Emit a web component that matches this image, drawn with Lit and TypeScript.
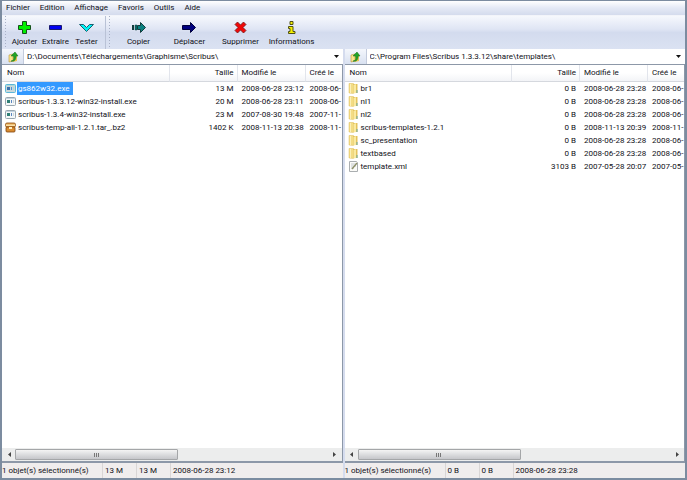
import { LitElement, html, css, svg } from "lit";
import { customElement, property } from "lit/decorators.js";

type Kind = "exe" | "archive" | "folder" | "xml";
interface Entry { name: string; kind: Kind; size: string; modified: string; created: string; selected?: boolean }

const leftEntries: Entry[] = [
  { name: "gs862w32.exe", kind: "exe", size: "13 M", modified: "2008-06-28 23:12", created: "2008-06-", selected: true },
  { name: "scribus-1.3.3.12-win32-install.exe", kind: "exe", size: "20 M", modified: "2008-06-28 23:11", created: "2008-06-" },
  { name: "scribus-1.3.4-win32-install.exe", kind: "exe", size: "23 M", modified: "2007-08-30 19:48", created: "2007-11-" },
  { name: "scribus-temp-all-1.2.1.tar_.bz2", kind: "archive", size: "1402 K", modified: "2008-11-13 20:38", created: "2008-11-" },
];
const folder = (name: string, modified = "2008-06-28 23:28", created = "2008-06-"): Entry =>
  ({ name, kind: "folder", size: "0 B", modified, created });
const rightEntries: Entry[] = [
  folder("br1"), folder("nl1"), folder("nl2"),
  folder("scribus-templates-1.2.1", "2008-11-13 20:39", "2008-11-"),
  folder("sc_presentation"), folder("textbased"),
  { name: "template.xml", kind: "xml", size: "3103 B", modified: "2007-05-28 20:07", created: "2007-05-" },
];

const fileIcons = {
  exe: svg`<rect x="0.5" y="1.5" width="10" height="8" rx="1" fill="#f4f7f8" stroke="#98a6b0"/><path d="M1 2h9v1H1z" fill="#c3d3df"/><path d="M2 4h3v3H2z" fill="#2f7f76"/><path d="M6 4h1v3H6z" fill="#5a86c0"/><path d="M8 4h1v3H8z" fill="#c9d3da"/>`,
  archive: svg`<rect x="0.5" y="1" width="10" height="4" rx="1.5" fill="#e8a850" stroke="#8a4d12" stroke-width=".8"/><rect x="1" y="5" width="9" height="5" rx="1" fill="#d98c30" stroke="#7d430e" stroke-width=".8"/><path d="M1 2.500h9v1.500H1z" fill="#fbe0a6"/><path d="M4 5h3v2H4z" fill="#fff0c4"/>`,
  folder: svg`<path d="M1 .5h4.500v10L1 10z" fill="#f3dc84" stroke="#dcbd5c" stroke-width=".5"/><path d="M5 1h4.500v9H5z" fill="#e3c25c"/><path d="M5.500 2l2.500-1v9l-2.500.5z" fill="#faeaa0"/><path d="M2 1h1v9H2z" fill="#fbf0b8"/><path d="M8.500 7h1v3h-1z" fill="#69aaa6"/>`,
  xml: svg`<path d="M1.500.5h7l1 1v9h-8z" fill="#fbfbf8" stroke="#aaaeb0"/><path d="M3 3h5M3 5h5M3 7h3" stroke="#c4c9cc"/><path d="M4 8l5-6" stroke="#8d9068" stroke-width="1.300"/>`,
};

const toolIcons = {
  add: svg`<path d="M5.500.5h4v4h4v4h-4v4h-4v-4h-4v-4h4z" fill="#00f000" stroke="#16501a"/>`,
  extract: svg`<path d="M1.500 4.500h12v4h-12z" fill="#0000f0" stroke="#1a1a70"/>`,
  test: svg`<path d="M.5 3.500h4l3 3 3-3h4l-7 7z" fill="#00f4f4" stroke="#1c6070"/>`,
  copy: svg`<path d="M1 4h2v5H1z" fill="#123c3c"/><path d="M4 4h2v5H4z" fill="#0a7070" stroke="#123c3c" stroke-width=".5"/><path d="M6.500 4.500h3v-3l5 5-5 5v-3h-3z" fill="#0a8080" stroke="#123c3c"/>`,
  move: svg`<path d="M.5 4.500h8v-3l5 5-5 5v-3h-8z" fill="#000080" stroke="#00003c"/>`,
  remove: svg`<path d="M2 3.500L4.500 1l3 3 3-3L13 3.500l-3 3 3 3-2.500 2.500-3-3-3 3L2 9.500l3-3z" fill="#f00808" stroke="#701818" stroke-width=".8"/>`,
  info: svg`<path d="M6 .5h3v3H6zM4.500 5.500H9v5h2v2H4.500v-2H6v-3H4.500z" fill="#f4f000" stroke="#505018"/>`,
};
const groups = [
  [["add", "Ajouter"], ["extract", "Extraire"], ["test", "Tester"]],
  [["copy", "Copier"], ["move", "Déplacer"], ["remove", "Supprimer"], ["info", "Informations"]],
] as [keyof typeof toolIcons, string][][];

const reset = css`
  * { box-sizing: border-box; }
  button, select { font: inherit; color: inherit; border: 0; margin: 0; padding: 0; background: none; border-radius: 0; }
  svg { display: block; }
`;

@customElement("file-panel")
export class FilePanel extends LitElement {
  @property() path = "";
  @property({ attribute: false }) entries: Entry[] = [];
  @property({ attribute: false }) status: string[] = [];

  static styles = [reset, css`
    :host { display: flex; flex-direction: column; min-width: 0; }
    .address { display: flex; height: 15px; }
    .up { width: 22px; display: grid; place-items: center; background: linear-gradient(#f4f7fc, #d9e1f1); border-right: 1px solid #c3cbdc; }
    .combo { flex: 1; display: grid; align-items: center; background: #fff; min-width: 0; }
    .combo select, .combo svg { grid-area: 1 / 1; }
    .combo select { appearance: none; width: 100%; height: 15px; padding-left: 3px; outline: none; }
    .combo svg { justify-self: end; margin-right: 3px; pointer-events: none; }
    .list { flex: 1; display: flex; flex-direction: column; background: #fff; border: 1px solid #8d98a8; border-width: 1px 1px 2px 0; overflow: hidden; }
    .rows { flex: 1; overflow: hidden; }
    table { table-layout: fixed; width: 100%; border-collapse: separate; border-spacing: 0; }
    .c-col { width: 68px; }
    .c-last { width: 36px; }
    th, td { font-weight: 400; padding: 0 0 0 4px; text-align: left; white-space: nowrap; }
    th { height: 17px; background: linear-gradient(#fff 50%, #f3f4f7); border-right: 1px solid #e2e5ec; border-bottom: 1px solid #d5d8de; }
    th:last-child { border-right: 0; }
    th:first-child { padding-left: 5px; }
    td { height: 13px; }
    td:first-child { padding: 0 0 0 3px; }
    th.num, td.num { text-align: right; padding-right: 4px; }
    th.num { padding-right: 3px; }
    .file { display: flex; align-items: center; height: 13px; }
    .name { padding: 0 3px 0 1px; line-height: 13px; }
    .selected .name { background: #3399ff; color: #fff; }
    .selected svg { filter: sepia(1) hue-rotate(170deg) saturate(3) brightness(.85); }
    .scroll { display: flex; height: 13px; background: #eceded; }
    .scroll button { width: 13px; display: grid; place-items: center; }
    .track { flex: 1; }
    .thumb { width: 52%; height: 11px; margin-top: 1px; display: grid; place-items: center; border: 1px solid #a4a6a8; border-radius: 1px; background: linear-gradient(#f4f4f4, #dcdddf 50%, #c5c6ca); }
    .status { display: flex; height: 15px; background: #f0eded; line-height: 15px; }
    .status span { width: 34px; padding-left: 2px; border-left: 1px solid #d9d6d6; white-space: nowrap; }
    .status span:first-child { width: 100px; padding-left: 0; border: 0; }
    .status span:last-child { flex: 1; }
  `];

  render() {
    return html`
      <div class="address">
        <button class="up" aria-label="Dossier parent"><svg width="12" height="12" viewBox="0 0 12 12"><path d="M2 4l4-1v7l-4 1z" fill="#f9e58c" stroke="#b99634" stroke-width=".6"/><path d="M6 3h4v7l-4 1z" fill="#e9c552"/><path d="M4 10c3 0 3-3 2.500-5H4l4-4 3 4H9c0 3-1 6-5 5z" fill="#22a428" stroke="#12701a" stroke-width=".5"/></svg></button>
        <div class="combo">
          <select aria-label="Chemin"><option>${this.path}</option></select>
          <svg width="7" height="4" viewBox="0 0 7 4"><path d="M1 0h5L3.500 3z" fill="#111"/></svg>
        </div>
      </div>
      <div class="list">
        <div class="rows">
          <table>
            <colgroup><col><col class="c-col"><col class="c-col"><col class="c-last"></colgroup>
            <thead><tr><th>Nom</th><th class="num">Taille</th><th>Modifié le</th><th>Créé le</th></tr></thead>
            <tbody>${this.entries.map((e) => html`
              <tr class=${e.selected ? "selected" : ""}>
                <td><div class="file"><svg width="12" height="11" viewBox="0 0 12 11">${fileIcons[e.kind]}</svg><span class="name">${e.name}</span></div></td>
                <td class="num">${e.size}</td><td>${e.modified}</td><td>${e.created}</td>
              </tr>`)}</tbody>
          </table>
        </div>
        <div class="scroll">
          <button aria-label="Gauche"><svg width="4" height="5" viewBox="0 0 4 5"><path d="M4 0v5L1 2.500z" fill="#444"/></svg></button>
          <div class="track"><div class="thumb"><svg width="6" height="4" viewBox="0 0 6 4"><path d="M.5 0v4M2.500 0v4M4.500 0v4" stroke="#777"/></svg></div></div>
          <button aria-label="Droite"><svg width="4" height="5" viewBox="0 0 4 5"><path d="M0 0v5l3-2.500z" fill="#444"/></svg></button>
        </div>
      </div>
      <div class="status">${this.status.map((s) => html`<span>${s}</span>`)}</div>`;
  }
}

@customElement("app-root")
export class AppRoot extends LitElement {
  static styles = [reset, css`
    :host { display: flex; flex-direction: column; box-sizing: border-box; min-height: 100vh; font: 8px/12px "Roboto", sans-serif; color: #101018;
      background: #d5dcee; border: 1px solid #7c8ca0; border-width: 1px 2px 2px; }
    nav { display: flex; height: 15px; gap: 10px; padding-left: 4px; background: linear-gradient(#fff, #e4e9f5 50%, #d4dbed); border-bottom: 1px solid #f2f4fa; }
    .tools { display: flex; height: 33px; background: linear-gradient(#f6f8fd, #dfe5f4 40%, #d3dbee 50%, #dbe2f2); }
    .group { display: flex; border-right: 1px solid #b9c2d6; padding: 0 3px 0 2px; }
    .group:last-child { border: 0; }
    .grip { width: 4px; margin-right: 1px; background: repeating-linear-gradient(#a7b0c6 0 1px, transparent 1px 3px) no-repeat 1px 0 / 1px 100%; }
    .tool { width: 31px; display: flex; flex-direction: column; align-items: center; padding-top: 5px; gap: 2px; white-space: nowrap; }
    .group:last-child .tool { width: 51px; }
    main { flex: 1; display: grid; grid-template-columns: 1fr 1fr; gap: 2px; }
  `];

  render() {
    return html`
      <nav>${["Fichier", "Edition", "Affichage", "Favoris", "Outils", "Aide"].map((m) => html`<button>${m}</button>`)}</nav>
      <div class="tools">${groups.map((g) => html`<div class="group"><span class="grip"></span>${g.map(([icon, label]) => html`
        <button class="tool"><svg width="15" height="13" viewBox="0 0 15 13">${toolIcons[icon]}</svg><span>${label}</span></button>`)}</div>`)}</div>
      <main>
        <file-panel .path=${"D:\\Documents\\Téléchargements\\Graphisme\\Scribus\\"} .entries=${leftEntries} .status=${["1 objet(s) sélectionné(s)", "13 M", "13 M", "2008-06-28 23:12"]}></file-panel>
        <file-panel .path=${"C:\\Program Files\\Scribus 1.3.3.12\\share\\templates\\"} .entries=${rightEntries} .status=${["1 objet(s) sélectionné(s)", "0 B", "0 B", "2008-06-28 23:28"]}></file-panel>
      </main>`;
  }
}
